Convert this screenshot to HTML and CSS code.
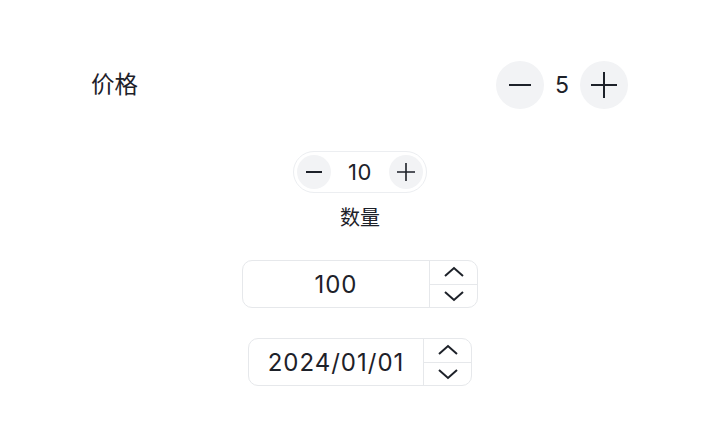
FILE: index.html
```html
<!DOCTYPE html>
<html lang="zh">
<head>
<meta charset="utf-8">
<link rel="stylesheet" href="styles.css">
</head>
<body>
<div class="page">
  <div class="row-price">
    <span class="label">价格</span>
    <div class="stepper-lg">
      <button class="circle-lg" aria-label="减少">
        <svg width="22" height="22" viewBox="0 0 22 22"><path d="M0 11H22" stroke="#1d2129" stroke-width="2"/></svg>
      </button>
      <span class="value-lg">5</span>
      <button class="circle-lg" aria-label="增加">
        <svg width="26" height="26" viewBox="0 0 26 26"><path d="M0 13H26M13 0V26" stroke="#1d2129" stroke-width="2"/></svg>
      </button>
    </div>
  </div>

  <div class="stepper-sm">
    <button class="circle-sm" aria-label="减少">
      <svg width="18" height="18" viewBox="0 0 18 18"><path d="M1 9H17" stroke="#1d2129" stroke-width="2"/></svg>
    </button>
    <span class="value-sm">10</span>
    <button class="circle-sm" aria-label="增加">
      <svg width="20" height="20" viewBox="0 0 20 20"><path d="M1 10H19M10 1V19" stroke="#1d2129" stroke-width="1.6"/></svg>
    </button>
  </div>
  <div class="caption">数量</div>

  <div class="spin spin-num">
    <div class="spin-text">100</div>
    <div class="spin-btns">
      <div class="spin-btn">
        <svg width="22" height="12" viewBox="0 0 22 12"><path d="M2 10L11 2L20 10" fill="none" stroke="#1d2129" stroke-width="2"/></svg>
      </div>
      <div class="spin-btn">
        <svg width="22" height="12" viewBox="0 0 22 12"><path d="M2 2L11 10L20 2" fill="none" stroke="#1d2129" stroke-width="2"/></svg>
      </div>
    </div>
  </div>

  <div class="spin spin-date">
    <div class="spin-text">2024/01/01</div>
    <div class="spin-btns">
      <div class="spin-btn">
        <svg width="22" height="12" viewBox="0 0 22 12"><path d="M2 10L11 2L20 10" fill="none" stroke="#1d2129" stroke-width="2"/></svg>
      </div>
      <div class="spin-btn">
        <svg width="22" height="12" viewBox="0 0 22 12"><path d="M2 2L11 10L20 2" fill="none" stroke="#1d2129" stroke-width="2"/></svg>
      </div>
    </div>
  </div>
</div>
</body>
</html>
```

FILE: styles.css
```css
* { box-sizing: border-box; }
html, body { margin: 0; padding: 0; background: #ffffff; }
body {
  font-family: Inter, "Noto Sans CJK SC", "Noto Sans", sans-serif;
  color: #1d2129;
}
.page {
  width: 720px;
  height: 425px;
  display: flex;
  flex-direction: column;
  align-items: center;
  padding-top: 61px;
}
.row-price {
  width: 100%;
  height: 48px;
  display: flex;
  align-items: center;
  justify-content: space-between;
  padding: 0 92px 0 91px;
}
.label {
  font-size: 23.5px;
  line-height: 28px;
  margin-top: -4px;
  font-family: "Noto Sans CJK SC", sans-serif;
}
.stepper-lg {
  display: flex;
  align-items: center;
  gap: 10px;
}
button {
  border: none;
  padding: 0;
  margin: 0;
  font: inherit;
  display: flex;
  align-items: center;
  justify-content: center;
}
.circle-lg {
  width: 48px;
  height: 48px;
  border-radius: 50%;
  background: #f2f3f5;
}
.value-lg {
  font-size: 23px;
  line-height: 28px;
  min-width: 16px;
  text-align: center;
}
.stepper-sm {
  margin-top: 42px;
  display: flex;
  align-items: center;
  gap: 10px;
  padding: 3px;
  border: 1px solid #eceef1;
  border-radius: 21px;
}
.circle-sm {
  width: 34px;
  height: 34px;
  border-radius: 50%;
  background: #f2f3f5;
}
.value-sm {
  font-size: 22px;
  line-height: 28px;
  min-width: 38px;
  text-align: center;
  letter-spacing: 0.5px;
}
.caption {
  margin-top: 12px;
  font-size: 20px;
  line-height: 24px;
  font-family: "Noto Sans CJK SC", sans-serif;
}
.spin {
  display: flex;
  height: 48px;
  border: 1px solid #e6e8eb;
  border-radius: 10px;
}
.spin-num { margin-top: 31px; width: 236px; }
.spin-date { margin-top: 30px; width: 224px; }
.spin-text {
  flex: 1;
  display: flex;
  align-items: center;
  justify-content: center;
  font-size: 24px;
  letter-spacing: 1px;
}
.spin-btns {
  width: 48px;
  display: flex;
  flex-direction: column;
  border-left: 1px solid #e6e8eb;
}
.spin-btn {
  flex: 1;
  display: flex;
  align-items: center;
  justify-content: center;
}
.spin-btn + .spin-btn { border-top: 1px solid #e6e8eb; }
```
